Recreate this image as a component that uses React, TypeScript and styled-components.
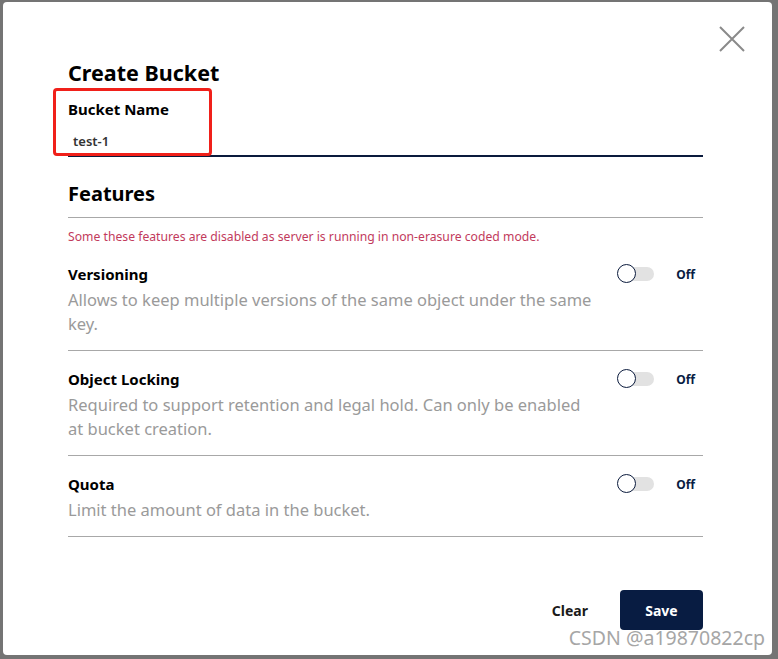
import React from 'react'
import styled, { createGlobalStyle } from 'styled-components'

const GlobalStyle = createGlobalStyle`
  html, body {
    margin: 0;
    padding: 0;
    background: #747474;
    font-family: "Noto Sans", "Noto Sans CJK SC", sans-serif;
  }
`

const Backdrop = styled.div`
  width: 778px;
  height: 659px;
  box-sizing: border-box;
  padding: 2px 6px 4px 3px;
  background: #747474;
`

const Dialog = styled.div`
  position: relative;
  height: 100%;
  box-sizing: border-box;
  background: #fff;
  border-radius: 4px;
  padding: 56px 69px 0 65px;
  display: flex;
  flex-direction: column;
`

const CloseButton = styled.button`
  position: absolute;
  top: 22px;
  right: 25px;
  width: 30px;
  height: 30px;
  padding: 0;
  border: none;
  background: transparent;
  cursor: pointer;
`

const Title = styled.h2`
  margin: 0;
  font-size: 21.5px;
  font-weight: 700;
  color: #000;
  line-height: 30px;
`

const NameField = styled.div`
  position: relative;
  display: flex;
  flex-direction: column;
  border-bottom: 2px solid #0a1a3c;
  padding-top: 11px;
`

const Highlight = styled.div`
  position: absolute;
  left: -15px;
  top: 0;
  width: 159px;
  height: 68px;
  box-sizing: border-box;
  border: 3px solid #f0201a;
  border-radius: 4px;
`

const FieldLabel = styled.label`
  font-size: 15px;
  font-weight: 700;
  color: #000;
  line-height: 20px;
`

const FieldInput = styled.div`
  font-size: 13px;
  font-weight: 600;
  color: #333;
  padding: 13px 0 5px 5px;
  line-height: 18px;
`

const SectionTitle = styled.h3`
  margin: 22px 0 0;
  font-size: 20px;
  font-weight: 700;
  color: #000;
  line-height: 30px;
  padding-bottom: 8px;
  border-bottom: 1px solid #a8a8a8;
`

const Notice = styled.div`
  font-size: 12.2px;
  color: #c23a5c;
  line-height: 16px;
  margin-top: 11px;
`

const FeatureList = styled.div`
  display: flex;
  flex-direction: column;
`

const FeatureRow = styled.div`
  display: grid;
  grid-template-columns: 1fr auto;
  column-gap: 20px;
  padding: 18px 0 14px;
  border-bottom: 1px solid #a8a8a8;
  &:first-child {
    padding-top: 19px;
  }
`

const FeatureText = styled.div`
  display: flex;
  flex-direction: column;
  max-width: 525px;
`

const FeatureName = styled.div`
  font-size: 15px;
  font-weight: 700;
  color: #000;
  line-height: 20px;
`

const FeatureDesc = styled.div`
  font-size: 16.5px;
  color: #9a9a9a;
  line-height: 24px;
  margin-top: 4px;
`

const SwitchWrap = styled.div`
  display: flex;
  align-items: center;
  gap: 22px;
  height: 20px;
  padding-right: 8px;
`

const Track = styled.div`
  position: relative;
  width: 36px;
  height: 14px;
  border-radius: 7px;
  background: #e2e2e2;
`

const Knob = styled.div`
  position: absolute;
  left: -1px;
  top: -3px;
  width: 17px;
  height: 17px;
  border-radius: 50%;
  background: #fff;
  border: 1.5px solid #0b1b3d;
`

const SwitchLabel = styled.span`
  font-size: 12px;
  font-weight: 700;
  color: #081c42;
`

const Actions = styled.div`
  display: flex;
  justify-content: flex-end;
  align-items: center;
  gap: 26px;
  margin-top: 53px;
`

const Button = styled.button<{ $primary?: boolean }>`
  font-family: inherit;
  font-size: 14px;
  font-weight: 700;
  border: none;
  border-radius: 4px;
  height: 40px;
  padding: 0 ${({ $primary }) => ($primary ? '24px' : '6px')};
  min-width: ${({ $primary }) => ($primary ? '83px' : '0')};
  background: ${({ $primary }) => ($primary ? '#081c42' : 'transparent')};
  color: ${({ $primary }) => ($primary ? '#fff' : '#1a1a1a')};
  cursor: pointer;
`

const Watermark = styled.div`
  position: absolute;
  right: 7px;
  bottom: 4px;
  font-size: 19.5px;
  color: #a6a6a6;
`

const features = [
  {
    name: 'Versioning',
    desc: 'Allows to keep multiple versions of the same object under the same key.',
  },
  {
    name: 'Object Locking',
    desc: 'Required to support retention and legal hold. Can only be enabled at bucket creation.',
  },
  {
    name: 'Quota',
    desc: 'Limit the amount of data in the bucket.',
  },
]

const App: React.FC = () => {
  return (
    <>
      <GlobalStyle />
      <Backdrop>
        <Dialog>
          <CloseButton aria-label="close">
            <svg width="30" height="30" viewBox="0 0 30 30">
              <path d="M3 3 L27 27 M27 3 L3 27" stroke="#8a8a8a" strokeWidth="2" fill="none" />
            </svg>
          </CloseButton>
          <Title>Create Bucket</Title>
          <NameField>
            <Highlight />
            <FieldLabel>Bucket Name</FieldLabel>
            <FieldInput>test-1</FieldInput>
          </NameField>
          <SectionTitle>Features</SectionTitle>
          <Notice>Some these features are disabled as server is running in non-erasure coded mode.</Notice>
          <FeatureList>
            {features.map((f) => (
              <FeatureRow key={f.name}>
                <FeatureText>
                  <FeatureName>{f.name}</FeatureName>
                  <FeatureDesc>{f.desc}</FeatureDesc>
                </FeatureText>
                <SwitchWrap>
                  <Track>
                    <Knob />
                  </Track>
                  <SwitchLabel>Off</SwitchLabel>
                </SwitchWrap>
              </FeatureRow>
            ))}
          </FeatureList>
          <Actions>
            <Button>Clear</Button>
            <Button $primary>Save</Button>
          </Actions>
          <Watermark>CSDN @a19870822cp</Watermark>
        </Dialog>
      </Backdrop>
    </>
  )
}

export default App
